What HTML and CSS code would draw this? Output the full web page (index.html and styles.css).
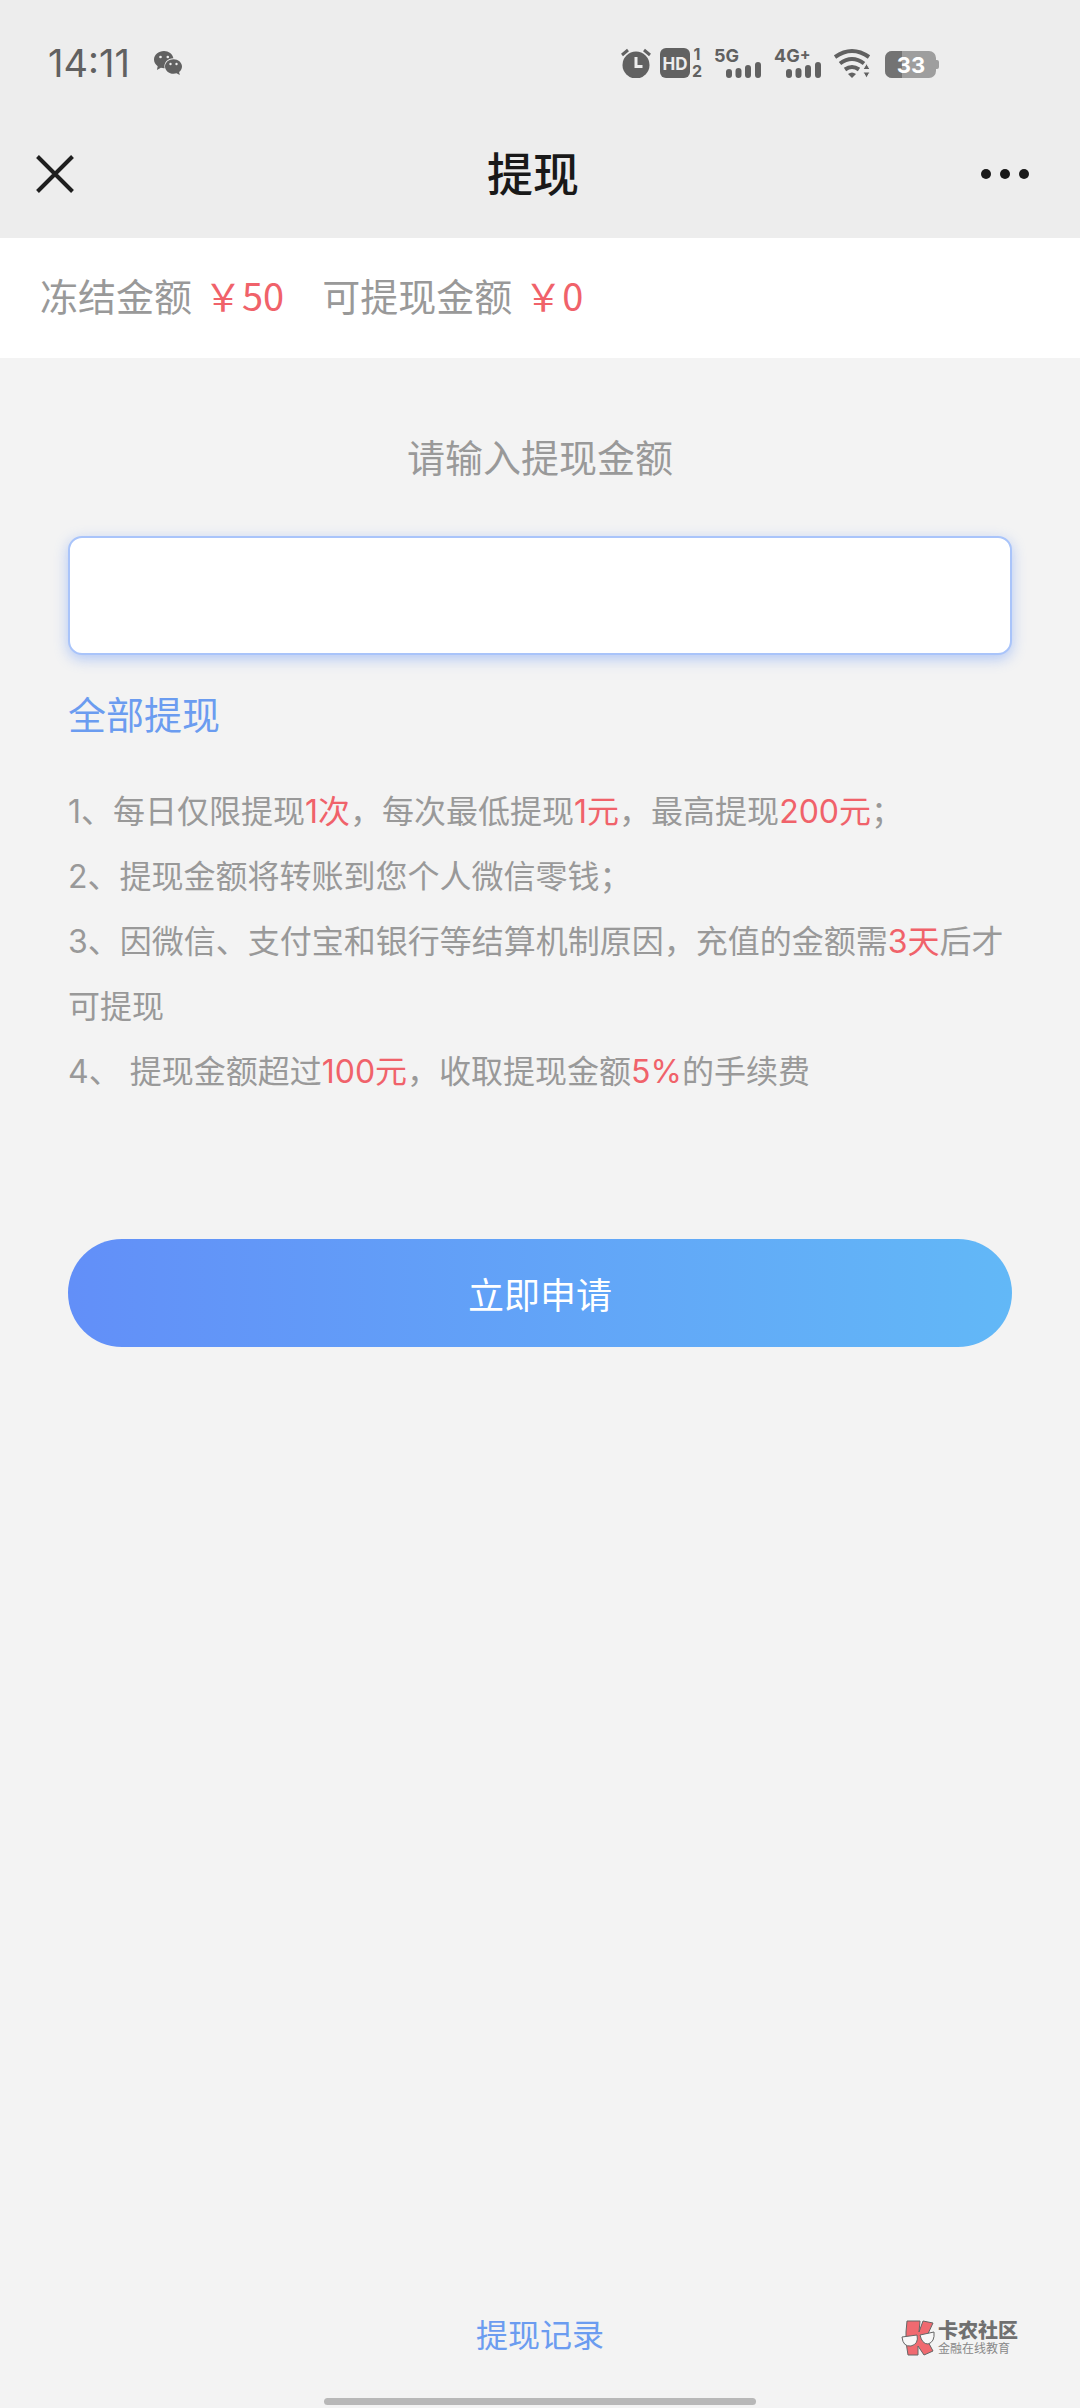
FILE: index.html
```html
<!DOCTYPE html>
<html lang="zh-CN">
<head>
<meta charset="utf-8">
<meta name="viewport" content="width=device-width, initial-scale=1">
<title>提现</title>
<link rel="stylesheet" href="styles.css">
</head>
<body>
<div class="page">
  <div class="status-bar">
    <div class="status-left">
      <span class="clock">14:11</span>
      <svg class="icon" width="28" height="24" viewBox="0 0 28 24" aria-hidden="true">
        <path fill="#616161" d="M10 0C4.500 0 0 3.800 0 8.600c0 2.700 1.400 5 3.700 6.600L2.900 19l4-2.200c1 .3 2 .4 3.100.4h.6C9.500 11.500 14 7.200 19.400 7.300 18.600 3 14.700 0 10 0z"/>
        <path fill="#616161" d="M28 15.500C28 11.400 24.100 8.200 19.500 8.200S11 11.400 11 15.500s3.900 7.300 8.500 7.300c1.100 0 2.100-.2 3-.5l3.300 1.700-.7-3c1.800-1.300 2.900-3.300 2.900-5.500z"/>
        <g fill="#ededed"><circle cx="6.500" cy="6" r="1.300"/><circle cx="13.800" cy="6" r="1.300"/><circle cx="16.500" cy="13" r="1.200"/><circle cx="22.500" cy="13" r="1.200"/></g>
      </svg>
    </div>
    <div class="status-right">
      <svg class="icon" width="30" height="30" viewBox="0 0 30 30" aria-hidden="true">
        <circle cx="15" cy="17" r="13.500" fill="#616161"/>
        <path d="M1 7l6-5M29 7l-6-5" stroke="#616161" stroke-width="3"/>
        <path d="M15 9v9.500h6.500" fill="none" stroke="#ededed" stroke-width="3"/>
      </svg>
      <svg class="icon" width="45" height="40" viewBox="0 -5 45 40" aria-hidden="true">
        <rect width="30" height="30" rx="6" fill="#616161"/>
        <text class="sig-text" x="15" y="21.500" font-size="17" text-anchor="middle" fill="#ededed">HD</text>
        <text class="sig-text" x="37" y="12" font-size="16" text-anchor="middle">1</text>
        <text class="sig-text" x="37" y="29" font-size="16" text-anchor="middle">2</text>
      </svg>
      <svg class="icon" width="51" height="40" viewBox="0 -5 51 40" aria-hidden="true">
        <text class="sig-text" x="0" y="14" font-size="18">5G</text>
        <path d="M15 24v3M24.500 23v4M34 20v7M44 17v10" stroke="#616161" stroke-width="6" stroke-linecap="round"/>
      </svg>
      <svg class="icon" width="51" height="40" viewBox="0 -5 51 40" aria-hidden="true">
        <text class="sig-text" x="0" y="14" font-size="18">4G<tspan dy="-2" font-size="16">+</tspan></text>
        <path d="M15 24v3M24.500 23v4M34 20v7M44 17v10" stroke="#616161" stroke-width="6" stroke-linecap="round"/>
      </svg>
      <svg class="icon" width="39" height="30" viewBox="0 0 39 30" aria-hidden="true">
        <g fill="none" stroke="#616161" stroke-width="4"><path d="M1 9q17-12 34 0"/><path d="M6 15.500q12-9 24 0"/><path d="M11 21.500q7-5 14 0"/></g>
        <path d="M14 26q4-3 8 0l-4 4z" fill="#616161"/>
        <path d="M29 21.500l3.500-6 3.500 6zM29 24l3.500 6 3.500-6z" fill="#616161" stroke="#ededed" stroke-width="1"/>
      </svg>
      <svg class="icon" width="57" height="30" viewBox="0 0 57 30" aria-hidden="true">
        <path d="M10 3h37a7 7 0 0 1 7 7v2h1q2 0 2 2v5q0 2-2 2h-1v2a7 7 0 0 1-7 7H10a7 7 0 0 1-7-7V10a7 7 0 0 1 7-7z" fill="#9e9e9e"/>
        <path d="M20 3H10a7 7 0 0 0-7 7v13a7 7 0 0 0 7 7h10z" fill="#737373"/>
        <text class="sig-text" x="29" y="25" font-size="22" text-anchor="middle" fill="#fff">33</text>
      </svg>
    </div>
  </div>

  <header class="nav-bar">
    <button class="nav-button" type="button" aria-label="关闭">
      <svg class="icon" width="38" height="38" viewBox="0 0 38 38" aria-hidden="true"><path d="M1.500 1.500l35 35M36.500 1.500l-35 35" stroke="#1f1f1f" stroke-width="4"/></svg>
    </button>
    <h1 class="nav-title">提现</h1>
    <button class="nav-button nav-more" type="button" aria-label="更多">
      <svg class="icon" width="50" height="12" viewBox="0 0 50 12" aria-hidden="true"><g fill="#191919"><circle cx="6" cy="6" r="5"/><circle cx="25" cy="6" r="5"/><circle cx="44" cy="6" r="5"/></g></svg>
    </button>
  </header>

  <section class="balance">
    <p class="balance-item">冻结金额<span class="amount">￥50</span></p>
    <p class="balance-item">可提现金额<span class="amount">￥0</span></p>
  </section>

  <main class="content">
    <form class="withdraw-form">
      <label class="prompt" for="amount">请输入提现金额</label>
      <input class="amount-input" id="amount" type="text" inputmode="decimal">
      <a class="all-link" href="#amount">全部提现</a>
      <div class="notes">
        <p>1、每日仅限提现<em>1次</em>，每次最低提现<em>1元</em>，最高提现<em>200元</em>；</p>
        <p>2、提现金额将转账到您个人微信零钱；</p>
        <p>3、因微信、支付宝和银行等结算机制原因，充值的金额需<em>3天</em>后才可提现</p>
        <p>4、 提现金额超过<em>100元</em>，收取提现金额<em>5%</em>的手续费</p>
      </div>
      <button class="submit" type="button">立即申请</button>
    </form>
  </main>

  <footer class="footer">
    <a class="record-link" href="#records">提现记录</a>
    <div class="home-indicator"></div>
  </footer>

  <div class="watermark">
    <svg class="icon" width="34" height="36" viewBox="0 0 34 36" aria-hidden="true">
      <g fill="#f06a70" stroke="#666" stroke-width="1"><path d="M6 1h13l-1 11 4-11 10 2-7 15 7 13-9 4-6-9v9H7L5 22V12z"/></g>
      <g fill="#f8f8f8" stroke="#666" stroke-width="1"><path d="M1 17l15-2q2 9-6 11Q2 27 1 17z"/><path d="M19 15l14-3q1 10-6 12-6 0-8-9z"/></g>
    </svg>
    <div class="watermark-text">
      <strong>卡农社区</strong>
      <span>金融在线教育</span>
    </div>
  </div>
</div>
</body>
</html>
```
FILE: styles.css
```css
* {
  box-sizing: border-box;
}

body {
  margin: 0;
  background: #f3f3f3;
  color: #999;
  font-family: Inter, "Noto Sans CJK SC", sans-serif;
  font-size: 32px;
}

h1,
p {
  margin: 0;
}

a {
  color: #6b9cf0;
  text-decoration: none;
}

button {
  border: 0;
  font-family: inherit;
  cursor: pointer;
}

.icon {
  display: block;
  flex: none;
}

.page {
  position: relative;
  display: flex;
  flex-direction: column;
  min-height: 100vh;
}

.status-bar {
  display: flex;
  align-items: center;
  justify-content: space-between;
  height: 112px;
  padding: 14px 141px 0 48px;
  background: #ededed;
}

.status-left {
  display: flex;
  align-items: center;
  gap: 24px;
}

.status-right {
  display: flex;
  align-items: center;
  gap: 9px;
}

.clock {
  color: #616161;
  font-size: 38px;
  line-height: 48px;
}

.sig-text {
  font-family: Inter, sans-serif;
  font-weight: 700;
}

.sig-text:not([fill]) {
  fill: #616161;
}

.nav-bar {
  display: grid;
  grid-template-columns: 1fr auto 1fr;
  align-items: center;
  height: 126px;
  padding: 0 50px 2px 36px;
  background: #ededed;
}

.nav-button {
  justify-self: start;
  padding: 0;
  background: none;
}

.nav-more {
  justify-self: end;
}

.nav-title {
  color: #191919;
  font-size: 46px;
  font-weight: 500;
  line-height: 64px;
}

.balance {
  display: flex;
  align-items: center;
  gap: 38px;
  height: 120px;
  padding: 0 40px 6px;
  background: #fff;
  font-family: "Noto Sans CJK SC", sans-serif;
  font-size: 38px;
}

.balance-item {
  display: flex;
  gap: 12px;
  line-height: 56px;
}

.amount,
.notes em {
  color: #f0626a;
  font-style: normal;
}

.content {
  flex: 1;
  padding: 72px 68px 0;
}

.withdraw-form {
  display: flex;
  flex-direction: column;
}

.prompt {
  font-size: 38px;
  line-height: 56px;
  text-align: center;
}

.amount-input {
  width: 100%;
  height: 119px;
  margin-top: 50px;
  padding: 0 32px;
  border: 2px solid #a9c4fa;
  border-radius: 14px;
  outline: none;
  background: #fff;
  box-shadow: 0 4px 14px rgba(98, 146, 248, 0.45);
  font-family: inherit;
  font-size: 38px;
}

.all-link {
  align-self: flex-start;
  margin-top: 32px;
  font-size: 38px;
  line-height: 56px;
}

.notes {
  margin-top: 36px;
  line-height: 65px;
}

.submit {
  height: 108px;
  margin-top: 135px;
  border-radius: 54px;
  background: linear-gradient(90deg, #628ff8, #62b8f7);
  color: #fff;
  font-size: 36px;
}

.footer {
  display: flex;
  flex-direction: column;
  align-items: center;
  gap: 38px;
  padding-bottom: 3px;
}

.record-link {
  line-height: 48px;
}

.home-indicator {
  width: 40%;
  height: 7px;
  border-radius: 4px;
  background: #b8b8b8;
}

.watermark {
  position: absolute;
  right: 62px;
  bottom: 52px;
  display: flex;
  align-items: center;
  gap: 3px;
}

.watermark-text {
  display: flex;
  flex-direction: column;
  color: #888;
  font-size: 12px;
  line-height: 14px;
}

.watermark-text strong {
  color: #707070;
  font-size: 20px;
  font-weight: 900;
  line-height: 21px;
}
```
